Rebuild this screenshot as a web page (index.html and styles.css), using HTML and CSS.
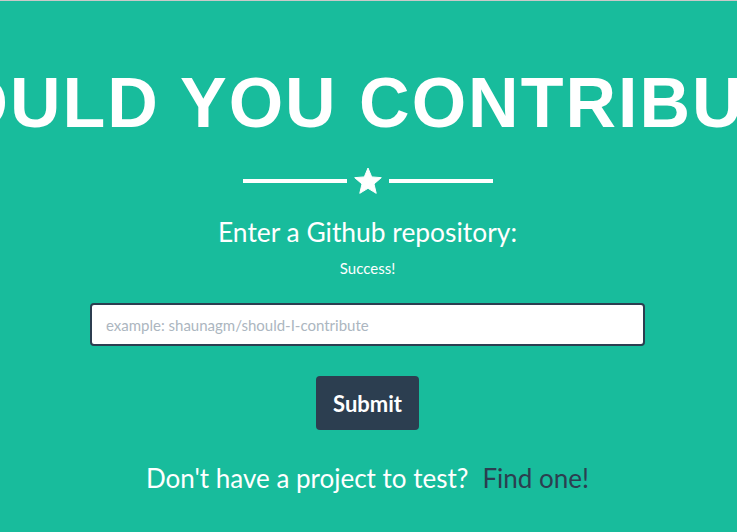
FILE: index.html
```html
<!DOCTYPE html>
<html lang="en">
<head>
<meta charset="utf-8">
<title>Should You Contribute?</title>
<link rel="stylesheet" href="styles.css">
</head>
<body>
<header class="hero">
  <div class="title-wrap">
    <h1 class="title">Should you contribute?</h1>
  </div>
  <div class="divider">
    <span class="divider-line"></span>
    <svg class="star" viewBox="0 0 28 28" aria-hidden="true">
      <polygon points="14,1 17.7,9.9 27.31,10.67 19.99,16.95 22.23,26.33 14,21.3 5.77,26.33 8.01,16.95 0.69,10.67 10.3,9.9" fill="#fff" stroke="#fff" stroke-width="1" stroke-linejoin="round"/>
    </svg>
    <span class="divider-line"></span>
  </div>
  <p class="prompt">Enter a Github repository:</p>
  <p class="status">Success!</p>
  <form class="repo-form">
    <input class="repo-input" type="text" placeholder="example: shaunagm/should-I-contribute" autofocus>
    <button class="btn-submit" type="button">Submit</button>
  </form>
  <p class="find">Don't have a project to test?<a class="find-link" href="#">Find one!</a></p>
</header>
</body>
</html>
```
FILE: styles.css
```css
html, body {
  margin: 0;
  padding: 0;
}
body {
  background: #18bc9c;
  overflow: hidden;
  font-family: Lato, "Liberation Sans", sans-serif;
  color: #fff;
}
.hero {
  border-top: 1px solid #c9c9c9;
  padding: 67px 2px 0 0;
  display: flex;
  flex-direction: column;
  align-items: center;
  min-height: 531px;
  box-sizing: border-box;
}
.title-wrap {
  width: 100%;
  display: flex;
  justify-content: center;
}
.title {
  flex: none;
  margin: 0;
  white-space: nowrap;
  font-family: "Liberation Sans", Arial, sans-serif;
  font-weight: 700;
  font-size: 70px;
  line-height: 70px;
  letter-spacing: 2px;
  text-transform: uppercase;
  color: #fff;
}
.divider {
  margin-top: 29px;
  height: 28px;
  display: flex;
  align-items: center;
  gap: 7px;
}
.divider-line {
  display: block;
  width: 104px;
  height: 4px;
  background: #fff;
}
.star {
  width: 28px;
  height: 28px;
  display: block;
}
.prompt {
  margin: 21px 0 0;
  font-size: 26.4px;
  line-height: 32px;
}
.status {
  margin: 10px 0 0;
  font-size: 15px;
  line-height: 20px;
}
.repo-form {
  margin: 25px 0 0;
  display: flex;
  flex-direction: column;
  align-items: center;
}
.repo-input {
  box-sizing: border-box;
  width: 555px;
  height: 43px;
  border: 2px solid #2c3e50;
  border-radius: 4px;
  padding: 0 14px;
  font-family: Lato, "Liberation Sans", sans-serif;
  font-size: 15px;
  color: #2c3e50;
  caret-color: #2c3e50;
  background: #fff;
  outline: none;
}
.repo-input::placeholder {
  color: #acb6c0;
}
.btn-submit {
  margin-top: 30px;
  width: 103px;
  height: 54px;
  border: none;
  border-radius: 4px;
  background: #2c3e50;
  color: #fff;
  font-family: Lato, "Liberation Sans", sans-serif;
  font-weight: 700;
  font-size: 22px;
  padding: 0;
}
.find {
  margin: 32px 0 0;
  font-size: 26px;
  line-height: 32px;
}
.find-link {
  margin-left: 14px;
  color: #2c3e50;
  text-decoration: none;
}
```
